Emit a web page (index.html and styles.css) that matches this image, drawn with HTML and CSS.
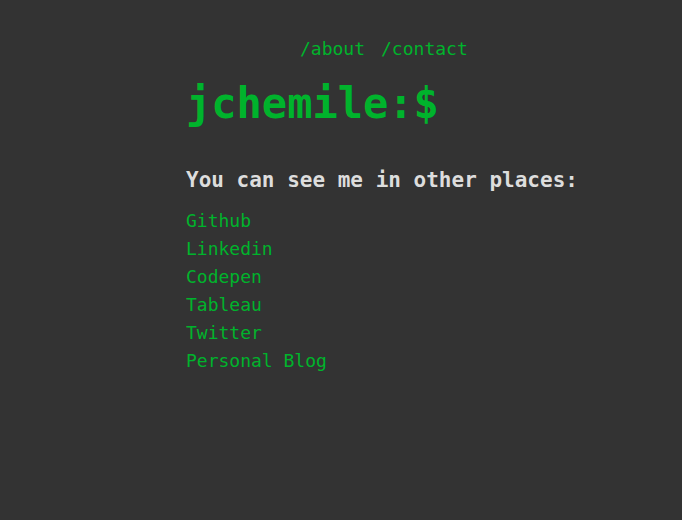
FILE: index.html
```html
<!DOCTYPE html>
<html lang="en">
<head>
<meta charset="utf-8">
<title>jchemile</title>
<link rel="stylesheet" href="styles.css">
</head>
<body>
<main class="page">
  <nav class="nav">
    <a href="#" class="nav-link">/about</a>
    <a href="#" class="nav-link">/contact</a>
  </nav>
  <h1 class="title">jchemile:$</h1>
  <h2 class="subtitle">You can see me in other places:</h2>
  <ul class="links">
    <li><a href="#" class="link">Github</a></li>
    <li><a href="#" class="link">Linkedin</a></li>
    <li><a href="#" class="link">Codepen</a></li>
    <li><a href="#" class="link">Tableau</a></li>
    <li><a href="#" class="link">Twitter</a></li>
    <li><a href="#" class="link">Personal Blog</a></li>
  </ul>
</main>
</body>
</html>
```

FILE: styles.css
```css
html, body {
  margin: 0;
  padding: 0;
  background: #333333;
  height: 100%;
}
body {
  font-family: "DejaVu Sans Mono", "Liberation Mono", monospace;
  color: #dddddd;
}
a {
  color: #00b32c;
  text-decoration: none;
}
.page {
  display: flex;
  flex-direction: column;
  align-items: flex-start;
  padding: 38px 0 0 186px;
}
.nav {
  display: flex;
  gap: 16px;
  margin-left: 114px;
  font-size: 18px;
  line-height: 22px;
}
.title {
  margin: 16px 0 0;
  font-size: 42px;
  line-height: 56px;
  font-weight: bold;
  color: #00b32c;
}
.subtitle {
  margin: 34px 0 0;
  font-size: 21px;
  line-height: 28px;
  font-weight: bold;
  color: #dddddd;
}
.links {
  list-style: none;
  margin: 13px 0 0;
  padding: 0;
  font-size: 18px;
  line-height: 28px;
}
```
